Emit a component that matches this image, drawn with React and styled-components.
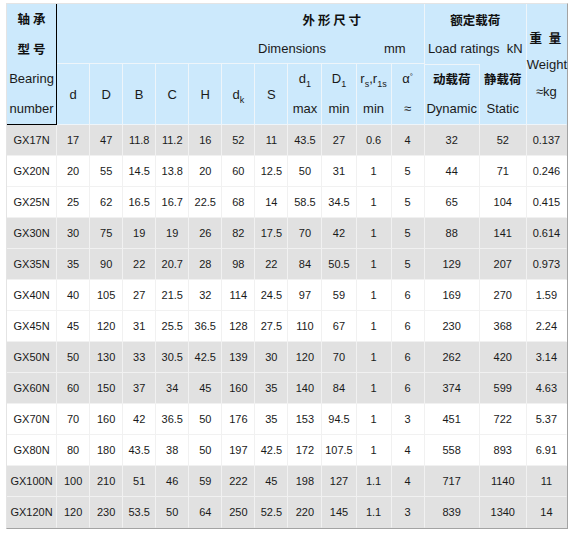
import React from "react";
import styled, { createGlobalStyle } from "styled-components";

const GlobalStyle = createGlobalStyle`
  body {
    margin: 0;
    background: #fff;
    font-family: "Liberation Sans", Arial, sans-serif;
  }
`;

const widths = [50, 33, 33, 33, 33, 33, 33, 33, 34, 34, 35, 33, 55, 47, 40];

const rows = [
  ["GX17N", "17", "47", "11.8", "11.2", "16", "52", "11", "43.5", "27", "0.6", "4", "32", "52", "0.137"],
  ["GX20N", "20", "55", "14.5", "13.8", "20", "60", "12.5", "50", "31", "1", "5", "44", "71", "0.246"],
  ["GX25N", "25", "62", "16.5", "16.7", "22.5", "68", "14", "58.5", "34.5", "1", "5", "65", "104", "0.415"],
  ["GX30N", "30", "75", "19", "19", "26", "82", "17.5", "70", "42", "1", "5", "88", "141", "0.614"],
  ["GX35N", "35", "90", "22", "20.7", "28", "98", "22", "84", "50.5", "1", "5", "129", "207", "0.973"],
  ["GX40N", "40", "105", "27", "21.5", "32", "114", "24.5", "97", "59", "1", "6", "169", "270", "1.59"],
  ["GX45N", "45", "120", "31", "25.5", "36.5", "128", "27.5", "110", "67", "1", "6", "230", "368", "2.24"],
  ["GX50N", "50", "130", "33", "30.5", "42.5", "139", "30", "120", "70", "1", "6", "262", "420", "3.14"],
  ["GX60N", "60", "150", "37", "34", "45", "160", "35", "140", "84", "1", "6", "374", "599", "4.63"],
  ["GX70N", "70", "160", "42", "36.5", "50", "176", "35", "153", "94.5", "1", "3", "451", "722", "5.37"],
  ["GX80N", "80", "180", "43.5", "38", "50", "197", "42.5", "172", "107.5", "1", "4", "558", "893", "6.91"],
  ["GX100N", "100", "210", "51", "46", "59", "222", "45", "198", "127", "1.1", "4", "717", "1140", "11"],
  ["GX120N", "120", "230", "53.5", "50", "64", "250", "52.5", "220", "145", "1.1", "3", "839", "1340", "14"],
];

const Page = styled.div`
  padding: 3px 0 0 6px;
`;

const Table = styled.table`
  table-layout: fixed;
  width: 562px;
  border-collapse: separate;
  border-spacing: 0;
  border-top: 1px solid #e4e4e4;
  border-left: 1px solid #e4e4e4;
  border-right: 1px solid #a3a3a3;
  border-bottom: 1px solid #a3a3a3;
  color: #1a1a1a;
`;

const HeadRow = styled.tr`
  height: ${(p) => p.$h}px;
`;

const Head = styled.th`
  background: #cce9fc;
  padding: 0;
  font-weight: normal;
  font-size: 13px;
  line-height: ${(p) => p.$lh || 29}px;
  text-align: center;
  vertical-align: middle;
  white-space: nowrap;
  border-right: 1px solid ${(p) => (p.$dark ? "#000" : p.$last ? "transparent" : "#eef5fa")};
  border-bottom: 1px solid ${(p) => (p.$dark ? "#000" : p.$open ? "transparent" : "#eef5fa")};
  padding-left: ${(p) => p.$pl || 0}px;
  box-shadow: ${(p) => (p.$topLine ? "inset 0 1px 0 #eef5fa" : "none")};
`;

const Line = styled.div``;

const Zh = styled.div`
  font-family: "Noto Sans CJK SC", "Liberation Sans", sans-serif;
  font-weight: 700;
  font-size: 12.5px;
  color: #111;
  letter-spacing: ${(p) => p.$wide || 0}px;
`;

const Sub = styled.sub`
  font-size: 9px;
  vertical-align: -4px;
  line-height: 0;
`;

const Sup = styled.sup`
  font-size: 8px;
  vertical-align: 4px;
  line-height: 0;
`;

const Unit = styled.span`
  display: inline-block;
  margin-left: 58px;
`;

const DataRow = styled.tr`
  height: 31px;
  background: ${(p) => (p.$shade ? "#e1e1e1" : "#ffffff")};
`;

const Cell = styled.td`
  padding: 0;
  font-size: 11px;
  text-align: center;
  vertical-align: middle;
  white-space: nowrap;
  border-right: 1px solid ${(p) => (p.$last ? "transparent" : "#f1f1f1")};
  border-bottom: 1px solid ${(p) => (p.$end ? "transparent" : "#f1f1f1")};
`;

const Sym = ({ base, sub }) => (
  <>
    {base}
    <Sub>{sub}</Sub>
  </>
);

const App = () => {
  return (
    <Page>
      <GlobalStyle />
      <Table>
        <colgroup>
          {widths.map((w, i) => (
            <col key={i} style={{ width: w }} />
          ))}
        </colgroup>
        <thead>
          <HeadRow $h={60}>
            <Head rowSpan={2} $dark $lh={30}>
              <Zh>轴 承</Zh>
              <Zh>型 号</Zh>
              <Line>Bearing</Line>
              <Line>number</Line>
            </Head>
            <Head colSpan={11} $pl={183}>
              <Zh>外 形 尺 寸</Zh>
              <Line>
                Dimensions<Unit>mm</Unit>
              </Line>
            </Head>
            <Head colSpan={2} $open>
              <Zh>额定载荷</Zh>
              <Line>Load ratings&nbsp; kN</Line>
            </Head>
            <Head rowSpan={2} $last $lh={27}>
              <Zh $wide={2}>重 量</Zh>
              <Line>Weight</Line>
              <Line>≈kg</Line>
            </Head>
          </HeadRow>
          <HeadRow $h={61}>
            <Head>d</Head>
            <Head>D</Head>
            <Head>B</Head>
            <Head>C</Head>
            <Head>H</Head>
            <Head>
              <Sym base="d" sub="k" />
            </Head>
            <Head>S</Head>
            <Head $lh={30}>
              <Line>
                <Sym base="d" sub="1" />
              </Line>
              <Line>max</Line>
            </Head>
            <Head $lh={30}>
              <Line>
                <Sym base="D" sub="1" />
              </Line>
              <Line>min</Line>
            </Head>
            <Head $lh={30}>
              <Line>
                <Sym base="r" sub="s" />,<Sym base="r" sub="1s" />
              </Line>
              <Line>min</Line>
            </Head>
            <Head $lh={30}>
              <Line>
                α<Sup>°</Sup>
              </Line>
              <Line>≈</Line>
            </Head>
            <Head $topLine $lh={30}>
              <Zh>动载荷</Zh>
              <Line>Dynamic</Line>
            </Head>
            <Head $lh={30}>
              <Zh>静载荷</Zh>
              <Line>Static</Line>
            </Head>
          </HeadRow>
        </thead>
        <tbody>
          {rows.map((r, i) => (
            <DataRow key={r[0]} $shade={(i + 1) % 4 < 2}>
              {r.map((v, j) => (
                <Cell key={j} $last={j === r.length - 1} $end={i === rows.length - 1}>
                  {v}
                </Cell>
              ))}
            </DataRow>
          ))}
        </tbody>
      </Table>
    </Page>
  );
};

export default App;
